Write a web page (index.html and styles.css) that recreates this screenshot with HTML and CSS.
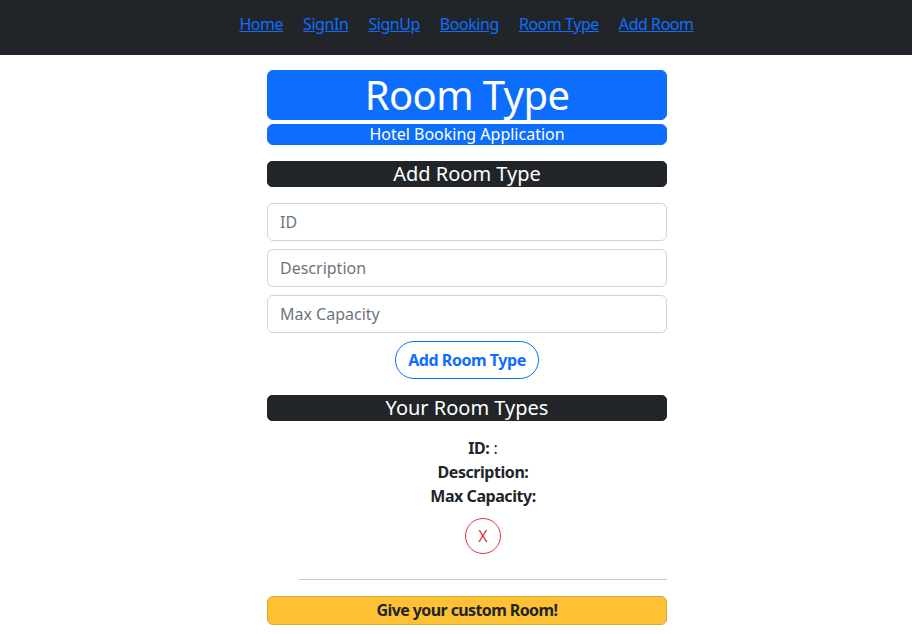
FILE: index.html
```html
<!DOCTYPE html>
<html lang="en">
<head>
<meta charset="utf-8">
<title>Room Type</title>
<link rel="stylesheet" href="styles.css">
</head>
<body>
<nav class="topnav">
  <a href="#" class="nav-link">Home</a>
  <a href="#" class="nav-link">SignIn</a>
  <a href="#" class="nav-link">SignUp</a>
  <a href="#" class="nav-link">Booking</a>
  <a href="#" class="nav-link">Room Type</a>
  <a href="#" class="nav-link">Add Room</a>
</nav>
<main class="page">
  <div class="column">
    <h1 class="title">Room Type</h1>
    <div class="subtitle">Hotel Booking Application</div>

    <h5 class="section-bar">Add Room Type</h5>
    <form class="room-form">
      <input class="form-control" type="text" placeholder="ID">
      <input class="form-control" type="text" placeholder="Description">
      <input class="form-control" type="text" placeholder="Max Capacity">
      <button type="button" class="btn-add">Add Room Type</button>
    </form>

    <h5 class="section-bar">Your Room Types</h5>
    <ul class="room-list">
      <li class="room-item">
        <div class="room-line"><b>ID:</b> :</div>
        <div class="room-line"><b>Description:</b></div>
        <div class="room-line"><b>Max Capacity:</b></div>
        <button type="button" class="btn-delete">X</button>
      </li>
      <li class="room-sep"><hr class="divider"></li>
    </ul>
    <div class="custom-bar">Give your custom Room!</div>
  </div>
</main>
</body>
</html>
```

FILE: styles.css
```css
* { box-sizing: border-box; }

body {
  margin: 0;
  font-family: "Noto Sans", "Open Sans", sans-serif;
  font-size: 16px;
  line-height: 1.5;
  color: #212529;
  background: #fff;
}

.topnav {
  height: 55px;
  background: #212529;
  display: flex;
  justify-content: center;
  align-items: flex-start;
  padding: 12px 0 0 21px;
}

.nav-link {
  color: #0d6efd;
  text-decoration: underline;
  padding: 0 10px;
  line-height: 24px;
  letter-spacing: -0.45px;
}

.page {
  display: flex;
  justify-content: center;
  padding-left: 22px;
}

.column {
  width: 400px;
  padding-top: 15px;
  display: flex;
  flex-direction: column;
}

.title {
  margin: 0;
  background: #0d6efd;
  border: 1px solid #0d6efd;
  border-radius: 6px;
  color: #fff;
  font-size: 40px;
  font-weight: 400;
  line-height: 48px;
  text-align: center;
  letter-spacing: -0.6px;
}

.subtitle {
  margin-top: 4px;
  background: #0d6efd;
  border: 1px solid #0d6efd;
  border-radius: 6px;
  color: #fff;
  font-size: 16px;
  line-height: 19px;
  text-align: center;
}

.section-bar {
  margin: 16px 0 0;
  background: #212529;
  border: 1px solid #212529;
  border-radius: 5px;
  color: #fff;
  font-size: 20px;
  font-weight: 400;
  line-height: 24px;
  text-align: center;
}

.room-form {
  margin-top: 16px;
  display: flex;
  flex-direction: column;
  gap: 8px;
  align-items: center;
}

.form-control {
  width: 100%;
  height: 38px;
  padding: 6px 12px;
  font-family: inherit;
  font-size: 16px;
  line-height: 24px;
  color: #212529;
  border: 1px solid #ced4da;
  border-radius: 6px;
  background: #fff;
}

.form-control::placeholder { color: #6c757d; }

.btn-add {
  height: 38px;
  width: 144px;
  padding: 0;
  font-family: inherit;
  font-size: 16px;
  font-weight: 700;
  color: #0d6efd;
  background: #fff;
  border: 1px solid #0d6efd;
  border-radius: 19px;
  letter-spacing: -0.45px;
}

.room-list {
  list-style: none;
  margin: 15px 0 0;
  padding: 0 0 0 32px;
}

.room-item {
  display: flex;
  flex-direction: column;
  align-items: center;
  font-size: 16px;
  line-height: 24px;
}

.room-line b {
  font-weight: 700;
  letter-spacing: -0.45px;
}

.btn-delete {
  margin-top: 10px;
  width: 36px;
  height: 36px;
  padding: 0;
  border: 1px solid #dc3545;
  border-radius: 50%;
  background: #fff;
  color: #dc3545;
  font-family: inherit;
  font-size: 16px;
}

.room-sep { padding-top: 25px; }

.divider {
  margin: 0;
  border: 0;
  border-top: 1px solid #c8c8c8;
}

.custom-bar {
  margin-top: 16px;
  height: 29px;
  background: #fec133;
  border: 1px solid #dca632;
  border-radius: 6px;
  text-align: center;
  font-weight: 700;
  font-size: 16px;
  line-height: 26px;
  color: #212529;
  letter-spacing: -0.6px;
}
```
